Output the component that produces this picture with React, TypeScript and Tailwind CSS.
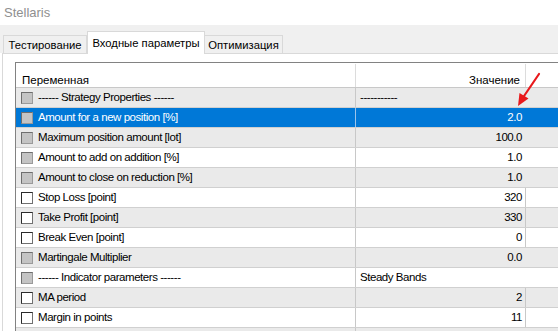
import React from "react";

type Row = {
  name: string;
  value: string;
  cb: "gray" | "white" | "none";
  left?: boolean;
  sep?: boolean;
  selected?: boolean;
};

const rows: Row[] = [
  { name: "------ Strategy Properties ------", value: "-----------", cb: "gray", left: true },
  { name: "Amount for a new position [%]", value: "2.0", cb: "gray", selected: true },
  { name: "Maximum position amount [lot]", value: "100.0", cb: "gray" },
  { name: "Amount to add on addition [%]", value: "1.0", cb: "gray" },
  { name: "Amount to close on reduction [%]", value: "1.0", cb: "gray" },
  { name: "Stop Loss [point]", value: "320", cb: "white", sep: true },
  { name: "Take Profit [point]", value: "330", cb: "white", sep: true },
  { name: "Break Even [point]", value: "0", cb: "white", sep: true },
  { name: "Martingale Multiplier", value: "0.0", cb: "gray" },
  { name: "------ Indicator parameters ------", value: "Steady Bands", cb: "gray", left: true },
  { name: "MA period", value: "2", cb: "white", sep: true },
  { name: "Margin in points", value: "11", cb: "white", sep: true },
  { name: "", value: "", cb: "none" },
];

function Check({ kind }: { kind: Row["cb"] }) {
  if (kind === "none") return <div className="w-[12px] h-[12px] ml-[5px] shrink-0" />;
  if (kind === "gray")
    return (
      <div className="w-[12px] h-[12px] ml-[5px] shrink-0 border border-t-[#6e6e6e] border-l-[#6e6e6e] border-r-[#9a9a9a] border-b-[#9a9a9a] bg-[#c4c4c4]" />
    );
  return (
    <div className="w-[12px] h-[12px] ml-[5px] shrink-0 border border-t-[#2a2a2a] border-l-[#2a2a2a] border-r-[#707070] border-b-[#707070] bg-white" />
  );
}

export default function App() {
  return (
    <div className="relative w-[558px] h-[331px] overflow-hidden bg-white flex flex-col font-['Liberation_Sans',Arial,sans-serif] text-[11px] text-black">
      {/* title bar */}
      <div className="h-[25px] shrink-0 flex items-center pl-[4px] text-[13px] text-[#8f8f8f]">Stellaris</div>
      {/* tab strip */}
      <div className="h-[28px] shrink-0 bg-[#f0f0f0] flex items-end pl-[3px]">
        <div className="w-[84px] h-[18px] border border-b-0 border-[#d9d9d9] bg-[#f0f0f0] flex items-center justify-center pt-[1px] text-[11.25px]">
          Тестирование
        </div>
        <div className="relative z-10 -mb-px w-[118px] h-[23px] border border-b-0 border-[#d9d9d9] bg-white flex items-start justify-center pt-[3px] text-[11.25px]">
          Входные параметры
        </div>
        <div className="w-[78px] h-[18px] border border-b-0 border-l-0 border-[#d9d9d9] bg-[#f0f0f0] flex items-center justify-center pt-[1px] text-[11.25px]">
          Оптимизация
        </div>
      </div>
      {/* panel */}
      <div className="flex-1 ml-[2px] border-l border-t border-[#d9d9d9] bg-white pl-[12px] pt-[8px] text-[11.5px] tracking-[-0.45px]">
        <div className="border-l border-t border-[#828282] flex flex-col">
          {/* header */}
          <div className="h-[25px] flex border-b border-[#c8c8c8] bg-white">
            <div className="w-[340px] shrink-0 border-r border-[#dcdcdc] pl-[6px] pt-[8px] mt-[1px] tracking-normal">Переменная</div>
            <div className="w-[170px] shrink-0 border-r border-[#dcdcdc] pr-[5px] pt-[8px] mt-[1px] text-right tracking-normal">Значение</div>
            <div className="flex-1" />
          </div>
          {rows.map((r, i) => {
            const bg = r.selected ? "bg-[#0078d7] text-white" : i % 2 === 0 ? "bg-[#eaeaea]" : "bg-white";
            return (
              <div key={i} className={`h-[20px] flex border-b border-[#d0d0d0] ${bg}`}>
                <div
                  className={`w-[340px] shrink-0 border-r flex items-center ${
                    r.selected ? "border-[#9cc4ea]" : "border-[#c8c8c8]"
                  }`}
                >
                  <Check kind={r.cb} />
                  <span className="ml-[5px] whitespace-nowrap">{r.name}</span>
                </div>
                <div
                  className={`w-[170px] shrink-0 border-r flex items-center whitespace-nowrap ${
                    r.left ? "justify-start pl-[4px]" : "justify-end pr-[3px]"
                  } ${r.sep ? "border-[#c8c8c8]" : "border-transparent"}`}
                >
                  {r.value}
                </div>
                <div className="flex-1" />
              </div>
            );
          })}
        </div>
      </div>
      {/* red arrow annotation */}
      <svg className="absolute left-0 top-0 pointer-events-none" width="558" height="331" viewBox="0 0 558 331">
        <line x1="539" y1="74" x2="522" y2="99" stroke="#e8191c" strokeWidth="2.2" strokeLinecap="round" />
        <polygon points="518,106 528.5,98.5 519.5,93" fill="#e8191c" />
      </svg>
    </div>
  );
}
